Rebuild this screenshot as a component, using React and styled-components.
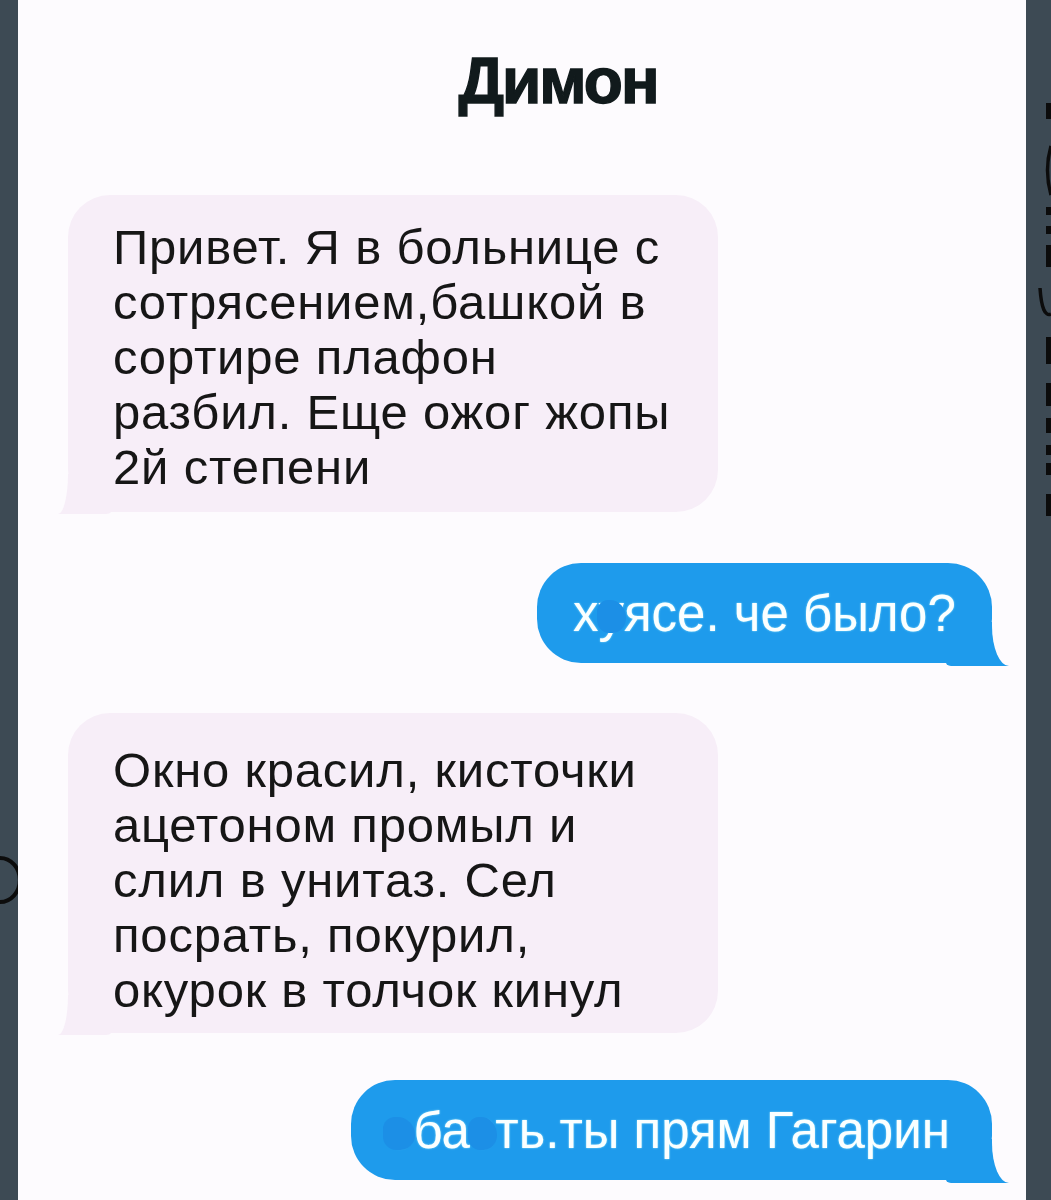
import React from 'react';
import styled, { createGlobalStyle } from 'styled-components';

const GlobalStyle = createGlobalStyle`
  html, body {
    margin: 0;
    padding: 0;
    background: #3e4b55;
  }
  body {
    font-family: "Liberation Sans", Arial, sans-serif;
  }
`;

const Frame = styled.div`
  display: flex;
  width: 1051px;
  height: 1200px;
  overflow: hidden;
  background: #3e4b55;
`;

const Edge = styled.div`
  width: ${props => props.$w}px;
  flex-shrink: 0;
  background: #3d4a54;
  position: relative;
`;

const EdgeMarks = styled.svg`
  position: absolute;
  top: 0;
  left: 0;
`;

const Sheet = styled.div`
  flex: 1;
  background: #fdfbfe;
  display: flex;
  flex-direction: column;
  padding: 49px 34px 0 50px;
`;

const Title = styled.h1`
  margin: 0 0 82px 56px;
  text-align: center;
  font-family: "Liberation Sans", Arial, sans-serif;
  font-weight: 700;
  font-size: 64px;
  line-height: 64px;
  letter-spacing: -2px;
  color: #111a1c;
  -webkit-text-stroke: 1.4px #111a1c;
`;

const Row = styled.div`
  display: flex;
  justify-content: ${props => (props.$out ? 'flex-end' : 'flex-start')};
  margin-bottom: ${props => props.$gap}px;
`;

const Bubble = styled.div`
  position: relative;
  box-sizing: border-box;
  font-family: "Liberation Sans", Arial, sans-serif;
  white-space: nowrap;
`;

const Incoming = styled(Bubble)`
  width: 650px;
  padding: ${props => props.$top}px 40px 0 45px;
  height: ${props => props.$h}px;
  background: #f7eef8;
  color: #161616;
  border-radius: 42px;
  font-size: 49px;
  line-height: 55px;
  letter-spacing: 0.8px;

  &::before {
    content: "";
    position: absolute;
    left: -10px;
    bottom: -2px;
    width: 56px;
    height: 40px;
    background: #f7eef8;
    border-bottom-right-radius: 8px;
  }
  &::after {
    content: "";
    position: absolute;
    left: -40px;
    bottom: -2px;
    width: 40px;
    height: 40px;
    background: #fdfbfe;
    border-bottom-right-radius: 10px 40px;
  }
`;

const Outgoing = styled(Bubble)`
  width: ${props => props.$w}px;
  height: 100px;
  display: flex;
  align-items: center;
  padding-left: ${props => props.$pl}px;
  background: #1e9bec;
  color: #fbffff;
  border-radius: 44px;
  font-size: 51px;
  text-shadow: 0 0 2px rgba(170, 240, 255, 0.9);

  &::before {
    content: "";
    position: absolute;
    right: -17px;
    bottom: -3px;
    width: 64px;
    height: 44px;
    background: #1e9bec;
    border-bottom-left-radius: 6px;
  }
  &::after {
    content: "";
    position: absolute;
    right: -40px;
    bottom: -3px;
    width: 40px;
    height: 44px;
    background: #fdfbfe;
    border-bottom-left-radius: 17px 40px;
  }
`;

const Text = styled.span`
  position: relative;
  z-index: 1;
`;

const Censor = styled.span`
  position: relative;
  display: inline-block;

  &::after {
    content: "";
    position: absolute;
    left: -2px;
    right: -2px;
    top: 16px;
    bottom: 10px;
    background: #1c8fe6;
    border-radius: 40% 60% 50% 45%;
  }
`;

const messages = [
  {
    out: false,
    top: 25,
    h: 317,
    gap: 51,
    lines: [
      'Привет. Я в больнице с',
      'сотрясением,башкой в',
      'сортире плафон',
      'разбил. Еще ожог жопы',
      '2й степени',
    ],
  },
  { out: true, w: 455, pl: 36, gap: 50, key: 'a' },
  {
    out: false,
    top: 30,
    h: 320,
    gap: 47,
    lines: [
      'Окно красил, кисточки',
      'ацетоном промыл и',
      'слил в унитаз. Сел',
      'посрать, покурил,',
      'окурок в толчок кинул',
    ],
  },
  { out: true, w: 641, pl: 34, gap: 0, key: 'b' },
];

const outgoingText = {
  a: (
    <>
      х<Censor>у</Censor>ясе. че было?
    </>
  ),
  b: (
    <>
      <Censor>е</Censor>ба<Censor>с</Censor>ть.ты прям Гагарин
    </>
  ),
};

const RightMarks = () => (
  <EdgeMarks width="25" height="1200" viewBox="0 0 25 1200">
    <g fill="#0c0c0c">
      <rect x="20" y="103" width="5" height="16" />
      <rect x="20" y="207" width="5" height="8" />
      <rect x="20" y="226" width="5" height="8" />
      <rect x="20" y="245" width="5" height="22" />
      <rect x="20" y="337" width="5" height="27" />
      <rect x="20" y="383" width="5" height="23" />
      <rect x="20" y="418" width="5" height="15" />
      <rect x="20" y="445" width="5" height="10" />
      <rect x="20" y="463" width="5" height="12" />
      <rect x="20" y="494" width="5" height="22" />
    </g>
    <g fill="none" stroke="#0c0c0c" strokeWidth="3.5">
      <path d="M25 146 Q18 170 25 195" />
      <path d="M14 288 Q16 318 25 314" />
    </g>
  </EdgeMarks>
);

const LeftMarks = () => (
  <EdgeMarks width="18" height="1200" viewBox="0 0 18 1200">
    <path d="M0 858 A18 20 0 0 1 0 902" fill="none" stroke="#0c0c0c" strokeWidth="4" />
  </EdgeMarks>
);

export default function App() {
  return (
    <>
      <GlobalStyle />
      <Frame>
        <Edge $w={18}>
          <LeftMarks />
        </Edge>
        <Sheet>
          <Title>Димон</Title>
          {messages.map((m, i) =>
            m.out ? (
              <Row key={i} $out $gap={m.gap}>
                <Outgoing $w={m.w} $pl={m.pl}>
                  <Text>{outgoingText[m.key]}</Text>
                </Outgoing>
              </Row>
            ) : (
              <Row key={i} $gap={m.gap}>
                <Incoming $top={m.top} $h={m.h}>
                  {m.lines.map((l, j) => (
                    <Text as="div" key={j}>{l}</Text>
                  ))}
                </Incoming>
              </Row>
            )
          )}
        </Sheet>
        <Edge $w={25}>
          <RightMarks />
        </Edge>
      </Frame>
    </>
  );
}
